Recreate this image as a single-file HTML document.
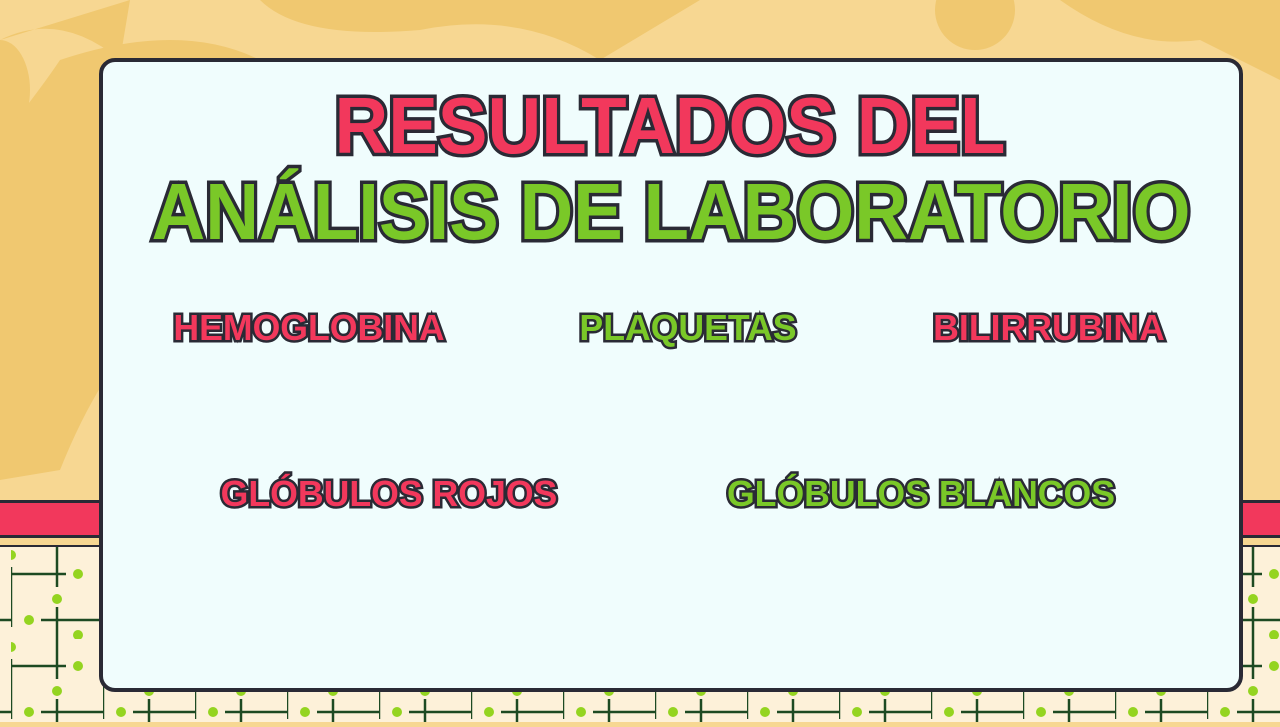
<!DOCTYPE html>
<html><head><meta charset="utf-8"><style>
body{margin:0;width:1280px;height:720px;overflow:hidden;position:relative;background:#f7d792;font-family:"Liberation Sans",sans-serif}
.band{position:absolute;left:0;width:1280px}
.card{position:absolute;left:99px;top:58px;width:1136px;height:626px;border:4px solid #2a2a35;border-radius:16px;background:#f0fdfd}
.t{position:absolute;font-weight:bold;white-space:nowrap;-webkit-text-stroke:7px #2a2a35;paint-order:stroke fill;line-height:1;transform:translate(-50%,-50%) scaleX(.93)}
.s{font-size:36px;-webkit-text-stroke:5px #2a2a35;transform:translate(-50%,-50%) scaleX(.99)}
.p{color:#f2385c}.g{color:#7ac828}
</style></head><body>
<svg style="position:absolute;left:0;top:0" width="1280" height="500">
<path d="M0 40 Q60 10 120 60 L130 0 Z" fill="#f0c870"/>
<ellipse cx="0" cy="90" rx="30" ry="50" fill="#f0c870"/>
<path d="M60 60 Q180 20 260 60 L200 300 Q120 320 60 470 L0 480 L0 140 Q40 90 60 60Z" fill="#f0c870"/>
<path d="M260 0 Q300 40 420 30 Q520 10 600 60 L700 0Z" fill="#f0c870"/>
<ellipse cx="975" cy="10" rx="40" ry="40" fill="#f0c870"/>
<path d="M1060 0 Q1130 50 1200 40 L1280 80 L1280 0Z" fill="#f0c870"/>
<circle cx="1248" cy="36" r="11" fill="#f0c870"/>
</svg>
<div class="band" style="top:500px;height:32px;background:#f2385c;border-top:3px solid #2a2a35;border-bottom:3px solid #2a2a35"></div>
<div class="band" style="top:545px;height:175px;background:#fdf1d9;border-top:2px solid #2a2a35">
<svg width="1280" height="175"><defs><pattern id="pt" width="92" height="92" patternUnits="userSpaceOnUse" x="11" y="0">
<g stroke="#1d4a22" stroke-width="2.5"><line x1="0" y1="20" x2="0" y2="80"/><line x1="46" y1="0" x2="46" y2="40"/><line x1="46" y1="60" x2="46" y2="92"/><line x1="-10" y1="27" x2="55" y2="27"/><line x1="30" y1="73" x2="92" y2="73"/></g>
<g fill="#94d420"><circle cx="0" cy="8" r="5"/><circle cx="67" cy="27" r="5"/><circle cx="46" cy="52" r="5"/><circle cx="18" cy="73" r="5"/><circle cx="67" cy="88" r="5"/></g>
</pattern></defs><rect width="1280" height="175" fill="url(#pt)"/></svg></div>
<div class="card"></div>
<div class="t p" style="left:670px;top:126px;font-size:80px">RESULTADOS DEL</div>
<div class="t g" style="left:671px;top:212px;font-size:80px">ANÁLISIS DE LABORATORIO</div>
<div class="t s p" style="left:309px;top:328px">HEMOGLOBINA</div>
<div class="t s g" style="left:688px;top:328px">PLAQUETAS</div>
<div class="t s p" style="left:1049px;top:328px">BILIRRUBINA</div>
<div class="t s p" style="left:389px;top:494px">GLÓBULOS ROJOS</div>
<div class="t s g" style="left:921px;top:494px">GLÓBULOS BLANCOS</div>
</body></html>
